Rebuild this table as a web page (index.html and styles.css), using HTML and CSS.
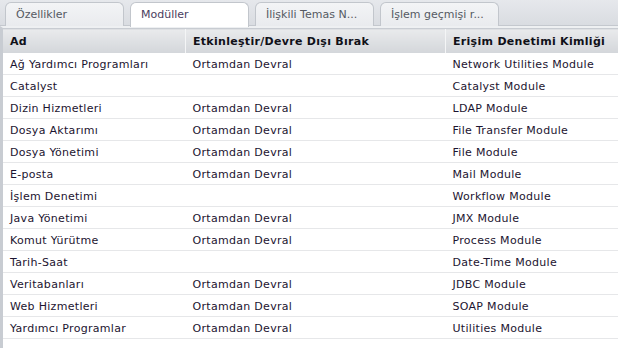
FILE: index.html
```html
<!DOCTYPE html>
<html lang="tr">

<head>
    <meta charset="UTF-8">
    <title>Modüller</title>
    <link rel="stylesheet" href="styles.css">
</head>

<body>
    <div class="panel">
        <div class="tabs">
            <div class="tab">Özellikler</div>
            <div class="tab active">Modüller</div>
            <div class="tab">İlişkili Temas N...</div>
            <div class="tab">İşlem geçmişi r...</div>
        </div>

        <div class="body">
            <table class="grid">
                <thead>
                    <tr>
                        <th class="c1">Ad</th>
                        <th class="c2">Etkinleştir/Devre Dışı Bırak</th>
                        <th class="c3">Erişim Denetimi Kimliği</th>
                    </tr>
                </thead>
                <tbody>
                    <tr><td>Ağ Yardımcı Programları</td><td>Ortamdan Devral</td><td>Network Utilities Module</td></tr>
                    <tr><td>Catalyst</td><td></td><td>Catalyst Module</td></tr>
                    <tr><td>Dizin Hizmetleri</td><td>Ortamdan Devral</td><td>LDAP Module</td></tr>
                    <tr><td>Dosya Aktarımı</td><td>Ortamdan Devral</td><td>File Transfer Module</td></tr>
                    <tr><td>Dosya Yönetimi</td><td>Ortamdan Devral</td><td>File Module</td></tr>
                    <tr><td>E-posta</td><td>Ortamdan Devral</td><td>Mail Module</td></tr>
                    <tr><td>İşlem Denetimi</td><td></td><td>Workflow Module</td></tr>
                    <tr><td>Java Yönetimi</td><td>Ortamdan Devral</td><td>JMX Module</td></tr>
                    <tr><td>Komut Yürütme</td><td>Ortamdan Devral</td><td>Process Module</td></tr>
                    <tr><td>Tarih-Saat</td><td></td><td>Date-Time Module</td></tr>
                    <tr><td>Veritabanları</td><td>Ortamdan Devral</td><td>JDBC Module</td></tr>
                    <tr><td>Web Hizmetleri</td><td>Ortamdan Devral</td><td>SOAP Module</td></tr>
                    <tr><td>Yardımcı Programlar</td><td>Ortamdan Devral</td><td>Utilities Module</td></tr>
                </tbody>
            </table>
        </div>
    </div>
</body>

</html>
```

FILE: styles.css
```css
body {
    margin: 0;
    font-family: "DejaVu Sans", Verdana, sans-serif;
    font-size: 11px;
    color: #1c1430;
    background-color: #ffffff;
}

.panel {
    width: 618px;
    height: 348px;
    overflow: hidden;
}

/* tab strip */
.tabs {
    display: flex;
    gap: 6px;
    height: 26px;
    padding: 2px 0 0 5px;
    box-sizing: border-box;
    background: linear-gradient(#e6e8ec, #d9dce1);
    border-bottom: 1px solid #c4c8ce;
}

.tab {
    width: 119px;
    height: 24px;
    padding: 5px 0 0 10px;
    box-sizing: border-box;
    background: linear-gradient(#f3f4f6, #e9ebee);
    border: 1px solid #c2c6cc;
    border-bottom: none;
    border-radius: 6px 6px 0 0;
    color: #555a62;
    white-space: nowrap;
    overflow: hidden;
}

.tab.active {
    height: 25px;
    margin-bottom: -1px;
    background: #ffffff;
    color: #4a3d5e;
}

.body {
    border-top: 2px solid #eef0f2;
    border-left: 3px solid #c8ccd2;
    height: 320px;
}

/* data grid */
.grid {
    width: 100%;
    border-collapse: collapse;
    table-layout: fixed;
}

.grid th {
    height: 23px;
    padding: 1px 7px 0;
    text-align: left;
    font-weight: bold;
    letter-spacing: 0.3px;
    color: #101018;
    background: linear-gradient(#e9eaec, #d3d6da);
    border-top: 1px solid #c8ccd2;
    border-left: 1px solid #f4f5f6;
    white-space: nowrap;
}

.grid th.c1 {
    width: 168px;
    border-left: none;
}

.grid th.c2 {
    width: 245px;
}

.grid td {
    height: 20px;
    padding: 1px 7px 0;
    letter-spacing: 0.3px;
    border-bottom: 1px solid #e6e7e9;
    white-space: nowrap;
}
```
